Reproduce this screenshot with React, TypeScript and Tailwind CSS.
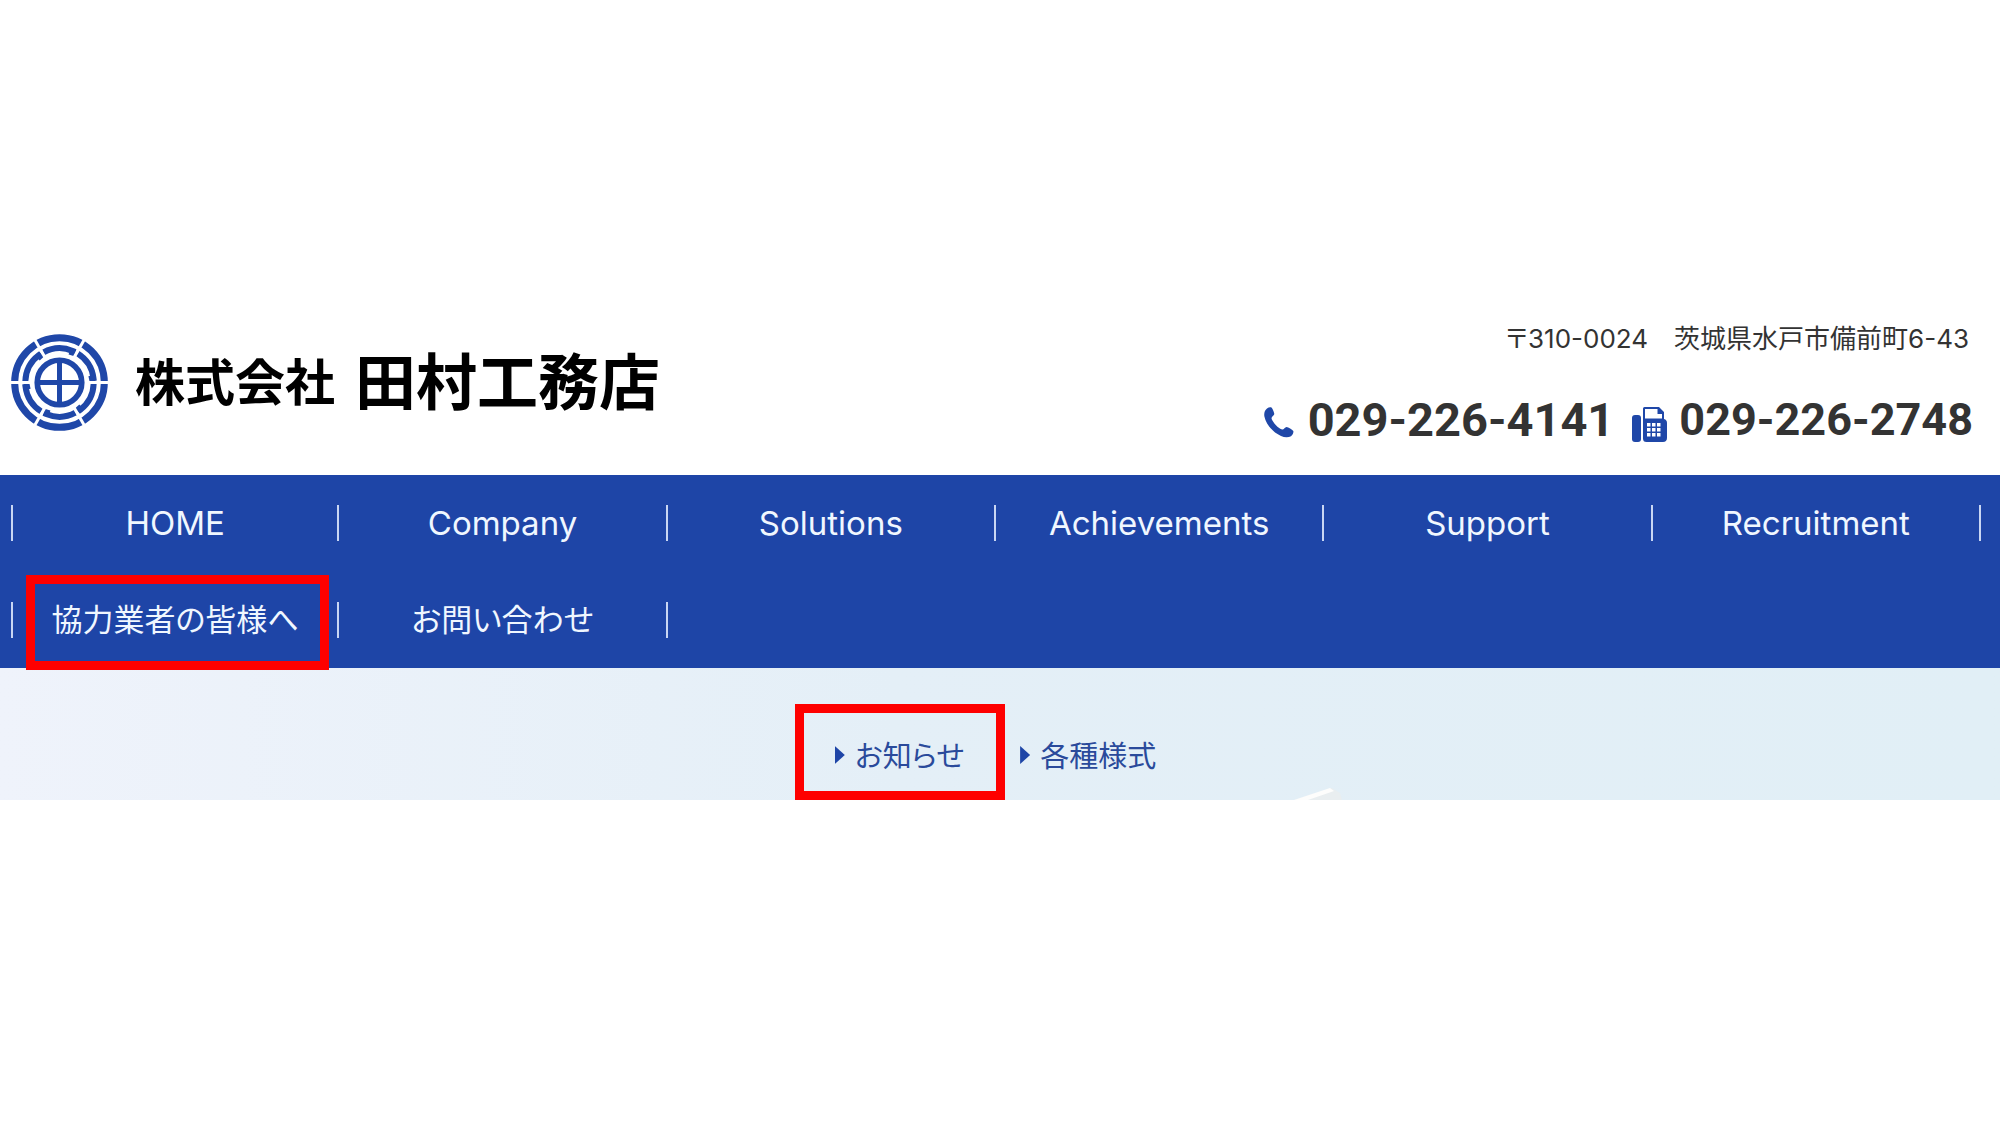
import { clsx } from "clsx";

type NavItem = {
  label: string;
  href: string;
  marked?: boolean;
};

const navItems: NavItem[] = [
  { label: "HOME", href: "#home" },
  { label: "Company", href: "#company" },
  { label: "Solutions", href: "#solutions" },
  { label: "Achievements", href: "#achievements" },
  { label: "Support", href: "#support" },
  { label: "Recruitment", href: "#recruitment" },
  { label: "協力業者の皆様へ", href: "#partners", marked: true },
  { label: "お問い合わせ", href: "#contact" },
];

const subItems: NavItem[] = [
  { label: "お知らせ", href: "#news", marked: true },
  { label: "各種様式", href: "#forms" },
];

// Six ring sectors around a crossed circle, each inner arc ends in a short hook.
function CompanyMark() {
  return (
    <svg viewBox="-146 -146 292 292" className="size-[97px] shrink-0" aria-hidden="true">
      <g fill="none" stroke="#1f47a8">
        <circle r="135" strokeWidth="21" />
        {[0, 60, 120, 180, 240, 300].map((angle) => (
          <g key={angle} transform={`rotate(${angle})`}>
            <path d="M-48 -91 A103 103 0 0 1 40 -95 L36 -82" strokeWidth="18" />
          </g>
        ))}
        <circle r="67" strokeWidth="17" />
        <path d="M-67 0H67M0 -67V67" strokeWidth="15" />
      </g>
      <g stroke="#fff" strokeWidth="9">
        {[0, 60, 120, 180, 240, 300].map((angle) => (
          <path key={angle} d="M82 0H148" transform={`rotate(${angle})`} />
        ))}
      </g>
    </svg>
  );
}

function PhoneIcon() {
  return (
    <svg viewBox="0 0 30 31" className="mt-1 h-[31px] w-[30px]" fill="#1f47a8" aria-hidden="true">
      <path d="M3 1.5C4.500 .3 6.500 0 7.500 .6C8.700 2 10 5 10.300 7C10.400 8.500 7.600 9.700 7.500 11.200C8 14.500 14.800 22 18.200 22.600C19.800 22.800 21 20 22.500 20C24.500 20.300 28 22.300 29.300 24C29.800 25.500 28.600 28 27 29.200C24.500 30.700 20.500 30.700 17 29C9 25.500 2 17.500 .4 9.500C-.2 6 .8 3.200 3 1.500Z" />
    </svg>
  );
}

function FaxIcon() {
  return (
    <svg viewBox="0 0 35 35" className="mt-2 size-[35px]" fill="none" aria-hidden="true">
      <rect x="0" y="8" width="9" height="27" rx="3" fill="#1f47a8" />
      <path d="M11 14V1.500Q11 0 12.500 0H27L32 5V12C34 12.500 35 14 35 16V31C35 33.500 33.500 35 31 35H14.500Q11 35 11 31.500Z" fill="#1f47a8" />
      <path d="M13 2H25.500V7H30V11.500H13Z" fill="#fff" />
      <path d="M15 16H18.500V19.500H15ZM20 16H23.500V19.500H20ZM25 16H28.500V19.500H25ZM15 21H18.500V24.500H15ZM20 21H23.500V24.500H20ZM25 21H28.500V24.500H25ZM15 26H18.500V29.500H15ZM20 26H23.500V29.500H20ZM25 26H28.500V29.500H25Z" fill="#fff" />
    </svg>
  );
}

function Header() {
  return (
    <header className="flex items-start justify-between px-[11px] pb-[31px]">
      <a
        href="#home"
        className="flex items-center pt-[14px] font-bold text-black [font-feature-settings:normal]"
      >
        <CompanyMark />
        <span className="mb-2 ml-[27px] text-[50px] leading-[60px]">株式会社</span>
        <span className="mb-2 ml-5 text-[61px] leading-[60px]">田村工務店</span>
      </a>
      <div className="flex flex-col items-end pr-4 text-[#333]">
        <address className="pr-1 font-[Inter,'Noto_Sans_CJK_JP',sans-serif] text-[26px] leading-[38px] not-italic">
          〒310-0024　茨城県水戸市備前町6-43
        </address>
        <div className="mt-[38px] flex items-center font-[Roboto] text-[47px] leading-[48px] font-bold">
          <PhoneIcon />
          <a href="tel:029-226-4141" className="ml-[14px]">029-226-4141</a>
          <span className="ml-[18px]">
            <FaxIcon />
          </span>
          <span className="ml-3 text-[45px]">029-226-2748</span>
        </div>
      </div>
    </header>
  );
}

function MainNav() {
  return (
    <nav className="bg-[#1e45a7] pr-[19px] pl-[11px]">
      <ul className="grid grid-cols-6 gap-y-px">
        {navItems.map((item, index) => (
          <li key={item.href} className="relative flex h-24 items-center">
            {index % 6 === 0 && <span className="h-9 w-0.5 bg-[#c9d6f3]" />}
            <a
              href={item.href}
              className={clsx(
                "flex-1 text-center leading-9 text-[#f0f7ff]",
                index < 6 ? "font-[Inter,sans-serif] text-[33px]" : "pb-1 text-[31px]",
              )}
            >
              {item.label}
            </a>
            <span className="h-9 w-0.5 bg-[#c9d6f3]" />
            {item.marked && (
              <span className="pointer-events-none absolute top-[3px] right-[10px] -bottom-0.5 left-[15px] z-10 border-9 border-[#fe0000]" />
            )}
          </li>
        ))}
      </ul>
    </nav>
  );
}

function SubNav() {
  return (
    <nav className="relative overflow-hidden bg-linear-to-r from-[#eff3fb] via-[#e4eff7] via-45% to-[#e1eff6] pt-9">
      {/* corner of the building in the hero photo */}
      <svg viewBox="0 0 50 14" className="absolute bottom-0 left-[1294px] h-[14px] w-[50px]" aria-hidden="true">
        <path d="M0 14L38 2L46 7L48 14Z" fill="#e9eef0" />
        <path d="M0 14L36 2L40 5L14 14Z" fill="#fdfdfc" />
      </svg>
      <ul className="flex justify-center pr-[34px]">
        {subItems.map((item) => (
          <li
            key={item.href}
            className={clsx(
              "flex h-24 items-center border-9",
              item.marked ? "border-[#fe0000] pr-8 pl-[31px]" : "border-transparent px-[6px]",
            )}
          >
            <a href={item.href} className="flex items-center gap-[10px] pt-1 text-[29px] leading-9 text-[#2a4a9b]">
              <span className="mt-0.5 h-[18px] w-[10px] bg-[#1e45a7] [clip-path:polygon(0_0,100%_50%,0_100%)]" />
              {item.label}
            </a>
          </li>
        ))}
      </ul>
    </nav>
  );
}

export default function App() {
  return (
    <div className="min-h-screen bg-white pt-80 font-['Noto_Sans_CJK_JP',sans-serif] [font-feature-settings:'palt']">
      <Header />
      <MainNav />
      <SubNav />
    </div>
  );
}
